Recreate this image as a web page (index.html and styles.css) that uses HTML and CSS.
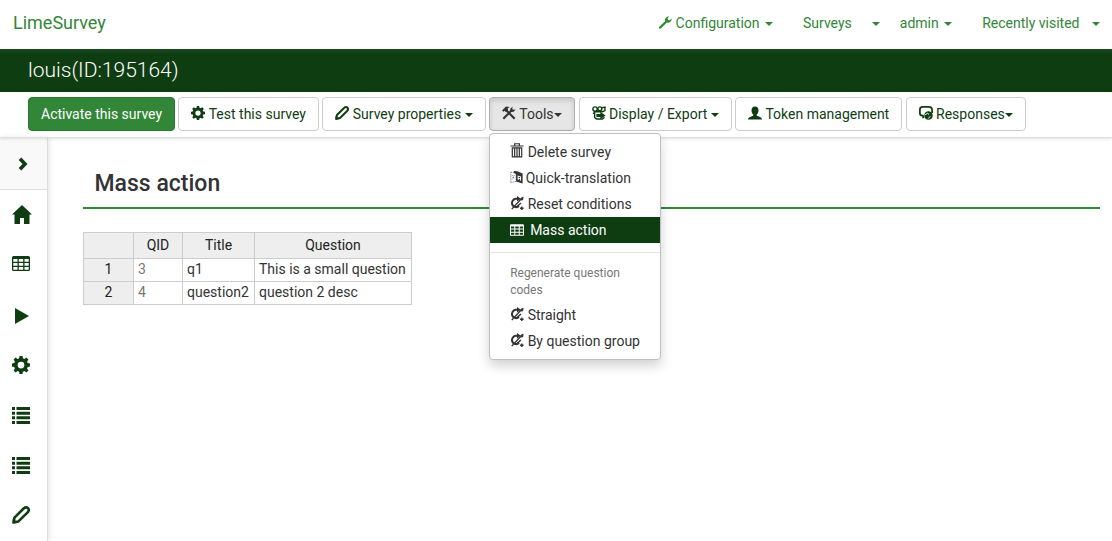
FILE: index.html
```html
<!DOCTYPE html>
<html lang="en">
<head>
    <meta charset="UTF-8">
    <meta name="viewport" content="width=device-width, initial-scale=1.0">
    <title>LimeSurvey</title>
    <link rel="stylesheet" href="styles.css">
</head>
<body>
    <!-- Icons used on the page -->
    <svg class="sprite" aria-hidden="true">
        <symbol id="cog" viewBox="0 0 16 16">
            <path fill="currentColor" fill-rule="evenodd" d="M6.700 0h2.600l.4 2 1.300.6L12.800 1.400l1.800 1.800L13.400 5l.6 1.300 2 .4v2.600l-2 .4-.6 1.300 1.200 1.800-1.800 1.800-1.800-1.200-1.300.6-.4 2H6.700l-.4-2L5 13.400l-1.800 1.200-1.800-1.800L2.600 11 2 9.700l-2-.4V6.700l2-.4L2.600 5 1.400 3.200l1.800-1.800L5 2.600 6.300 2zM8 5a3 3 0 1 0 0 6 3 3 0 0 0 0-6z"/>
        </symbol>
        <symbol id="pencil" viewBox="0 0 16 16">
            <path fill="none" stroke="currentColor" stroke-width="2.300" stroke-linejoin="round" d="M1.500 14.500l.7-4.200L10.300 2.200Q12.500.4 14.200 1.900 15.700 3.600 13.900 5.700L5.700 13.700z"/>
            <path fill="currentColor" d="M.3 15.700l.4-4.500 4 4z"/>
        </symbol>
        <symbol id="tools" viewBox="0 0 16 16">
            <path fill="none" stroke="currentColor" stroke-width="2.400" d="M1.500 14.500L11 5M4.500 4.500l10 10"/>
            <path fill="currentColor" d="M0 5l4.500-4.500L9 1 6.500 2.500l.5 2L4.500 7 3 5.500 1.500 6.500zM9.500 3L12 .5l-.2 3 .8.8 3-.3-2.300 2.700-3.300.2-1-1z"/>
        </symbol>
        <symbol id="export" viewBox="0 0 16 16">
            <g fill="none" stroke="currentColor" stroke-width="1.600">
                <circle cx="3.500" cy="3.500" r="2.500"/>
                <circle cx="9" cy="3.200" r="2.200"/>
                <path d="M11.500 2l3.300-.8v4l-3 1.300H3v6.500l2 1.800h7l2.300-2M1 8.200h2M5 5.800h5"/>
            </g>
            <path fill="currentColor" d="M5 9h4.500V6.500l6 4.300-6 4.200v-2.300H5z"/>
        </symbol>
        <symbol id="user" viewBox="0 0 16 16">
            <path fill="currentColor" d="M8 .5c2.700 0 4 1.800 4 4.500 0 2-.9 3.800-2.200 5 .2 1.200 1.200 1.500 3.200 2.200 1.800.6 2.800 1 3 3.300H0c.2-2.300 1.200-2.700 3-3.300 2-.7 3-1 3.200-2.200C4.900 8.800 4 7 4 5 4 2.300 5.300.5 8 .5z"/>
        </symbol>
        <symbol id="responses" viewBox="0 0 16 16">
            <path fill="none" stroke="currentColor" stroke-width="2" d="M5 14l-.5-3H3.500Q1 11 1 8V4q0-3 3-3h7q4 0 4 4v3"/>
            <circle cx="10.800" cy="10.800" r="4.900" fill="currentColor"/>
            <path fill="none" stroke="#fff" stroke-width="1" d="M6.500 10.500l3.500-2.500 1 2M10.500 14.500l2.500-3"/>
        </symbol>
        <symbol id="wrench" viewBox="0 0 16 16">
            <path fill="currentColor" d="M0 13.500l7.500-7C6.600 3.500 9 .2 12.500.5L10.600 2.800l.5 2 2 .3L15.600 3c.3 3.500-2.800 5.800-5.900 5L2.300 15.500H0z"/>
        </symbol>
        <symbol id="trash" viewBox="0 0 14 16">
            <path fill="none" stroke="currentColor" stroke-width="1.300" d="M0 3.200h14M4.500 3V.8h5V3M2 5.200h10v9.600H2zM4.500 5v10M7 5v10M9.500 5v10"/>
        </symbol>
        <symbol id="translate" viewBox="0 0 14 16">
            <path fill="none" stroke="currentColor" stroke-width=".8" stroke-dasharray="1.200 1" d="M.5 2.500l6 1v9.500l-6 1.500zM2 6l2.500 4M4.500 6L2 10.500"/>
            <path fill="currentColor" fill-rule="evenodd" d="M4 1l4 .5 6 2.500v11.500l-7.500-2.500V4.500L4 3.500zM8.300 6.200v5l1.200.4v-1.500l1.500.5v1.500l1.200.3V7.500zM9.500 7.700l1.500.4v1.300l-1.500-.4z"/>
        </symbol>
        <symbol id="reset" viewBox="0 0 16 16">
            <path fill="none" stroke="currentColor" stroke-width="2.300" d="M9 3.200H6.500a4.800 4.800 0 1 0 3.800 8.300"/>
            <path fill="none" stroke="currentColor" stroke-width="1.600" d="M2 15L14.500 1.500M7 13l5.500-5M11.500 14h4M13.500 12v4"/>
            <path fill="currentColor" d="M8 0l4.500 3L8 6.200zM12.500 3L15.500.5l-.5 4-2 1z"/>
        </symbol>
        <symbol id="table" viewBox="0 0 18 15">
            <path fill="currentColor" fill-rule="evenodd" d="M1.500 0h15Q18 0 18 1.500v12q0 1.500-1.500 1.500h-15Q0 15 0 13.500v-12Q0 0 1.500 0zM1.300 3v2.700h4.200V3zM6.800 3v2.700h4.400V3zM12.500 3v2.700h4.200V3zM1.300 7v2.700h4.200V7zM6.800 7v2.700h4.400V7zM12.500 7v2.700h4.200V7zM1.300 11v2.700h4.200V11zM6.800 11v2.700h4.400V11zM12.500 11v2.700h4.200V11z"/>
        </symbol>
        <symbol id="chevron" viewBox="0 0 10 14">
            <path fill="none" stroke="currentColor" stroke-width="3.600" d="M2 1.800L7 7l-5 5.200"/>
        </symbol>
        <symbol id="home" viewBox="0 0 20 19">
            <path fill="currentColor" d="M10 0l10 9.500h-2.500V19H12v-6H8v6H2.500V9.500H0z"/>
        </symbol>
        <symbol id="play" viewBox="0 0 14 16">
            <path fill="currentColor" d="M0 0l14 8-14 8z"/>
        </symbol>
        <symbol id="list" viewBox="0 0 18 17">
            <path fill="currentColor" d="M0 0h3v3H0zM4.500 0H18v3H4.500zM0 4.700h3v3H0zM4.500 4.700H18v3H4.500zM0 9.300h3v3H0zM4.500 9.300H18v3H4.500zM0 14h3v3H0zM4.500 14H18v3H4.500z"/>
        </symbol>
    </svg>

    <!-- Top navigation -->
    <nav class="navbar">
        <a class="brand">LimeSurvey</a>
        <ul class="nav">
            <li class="nav-config"><svg class="icon"><use href="#wrench"/></svg> Configuration <span class="caret"></span></li>
            <li class="nav-surveys">Surveys</li>
            <li class="nav-toggle"><span class="caret"></span></li>
            <li class="nav-admin">admin <span class="caret"></span></li>
            <li class="nav-recent">Recently visited <span class="caret"></span></li>
        </ul>
    </nav>

    <header class="title-bar">louis(ID:195164)</header>

    <!-- Survey toolbar -->
    <div class="toolbar">
        <button class="btn btn-primary">Activate this survey</button>
        <button class="btn"><svg class="icon"><use href="#cog"/></svg> Test this survey</button>
        <button class="btn"><svg class="icon"><use href="#pencil"/></svg> Survey properties <span class="caret"></span></button>
        <div class="dropdown">
            <button class="btn btn-open"><svg class="icon"><use href="#tools"/></svg> Tools<span class="caret"></span></button>
            <ul class="menu">
                <li><svg class="icon icon-trash"><use href="#trash"/></svg>Delete survey</li>
                <li><svg class="icon icon-translate"><use href="#translate"/></svg>Quick-translation</li>
                <li><svg class="icon"><use href="#reset"/></svg>Reset conditions</li>
                <li class="active"><svg class="icon"><use href="#table"/></svg>Mass action</li>
                <li class="divider"></li>
                <li class="menu-header">Regenerate question codes</li>
                <li><svg class="icon"><use href="#reset"/></svg>Straight</li>
                <li><svg class="icon"><use href="#reset"/></svg>By question group</li>
            </ul>
        </div>
        <button class="btn"><svg class="icon"><use href="#export"/></svg> Display / Export <span class="caret"></span></button>
        <button class="btn"><svg class="icon"><use href="#user"/></svg> Token management</button>
        <button class="btn"><svg class="icon"><use href="#responses"/></svg> Responses<span class="caret"></span></button>
    </div>

    <div class="wrapper">
        <aside class="sidebar">
            <div class="side-toggle"><svg class="side-chevron"><use href="#chevron"/></svg></div>
            <div class="side-item"><svg class="side-home"><use href="#home"/></svg></div>
            <div class="side-item"><svg class="side-table"><use href="#table"/></svg></div>
            <div class="side-item"><svg class="side-play"><use href="#play"/></svg></div>
            <div class="side-item"><svg><use href="#cog"/></svg></div>
            <div class="side-item"><svg class="side-list"><use href="#list"/></svg></div>
            <div class="side-item"><svg class="side-list"><use href="#list"/></svg></div>
            <div class="side-item"><svg><use href="#pencil"/></svg></div>
        </aside>

        <main>
            <h3>Mass action</h3>
            <table>
                <colgroup><col class="col-row"><col class="col-qid"><col class="col-title"><col class="col-question"></colgroup>
                <thead>
                    <tr><th></th><th>QID</th><th>Title</th><th>Question</th></tr>
                </thead>
                <tbody>
                    <tr><th>1</th><td class="dim">3</td><td>q1</td><td>This is a small question</td></tr>
                    <tr><th>2</th><td class="dim">4</td><td>question2</td><td>question 2 desc</td></tr>
                </tbody>
            </table>
        </main>
    </div>
</body>
</html>
```
FILE: styles.css
```css
* {
    box-sizing: border-box;
}

body {
    margin: 0;
    height: 541px;
    overflow: hidden;
    display: flex;
    flex-direction: column;
    font-family: Roboto, sans-serif;
    font-size: 14px;
    line-height: 20px;
    color: #333;
    background-color: #fff;
}

ul {
    list-style: none;
    margin: 0;
    padding: 0;
}

.sprite {
    display: none;
}

.icon {
    width: 14px;
    height: 14px;
    vertical-align: -1px;
}

.caret {
    display: inline-block;
    vertical-align: middle;
    border-top: 4px solid;
    border-left: 4px solid transparent;
    border-right: 4px solid transparent;
}

/* Top navigation */
.navbar {
    height: 49px;
    flex: none;
    display: flex;
    justify-content: space-between;
    padding: 13px 12px 0 13px;
    color: #328637;
}

.brand {
    font-size: 18px;
}

.nav {
    display: flex;
}

.nav .icon {
    width: 13px;
    height: 13px;
}

.nav .caret {
    margin-left: 2px;
}

.nav-surveys {
    margin-left: 30px;
}

.nav-toggle {
    margin-left: 18px;
}

.nav-admin {
    margin-left: 20px;
}

.nav-recent {
    margin-left: 30px;
}

.nav-recent .caret {
    margin-left: 9px;
}

/* Survey title */
.title-bar {
    height: 43px;
    flex: none;
    padding: 11px 28px;
    font-size: 21px;
    font-weight: 300;
    color: #fff;
    background: linear-gradient(#1b4a1e, #0f3d12 5px);
}

/* Toolbar */
.toolbar {
    height: 46px;
    flex: none;
    display: flex;
    gap: 3.4px;
    padding: 5px 28px;
    border-bottom: 1px solid #e0dede;
    box-shadow: 0 1px 3px rgba(0, 0, 0, 0.12);
    position: relative;
    z-index: 2;
}

.btn {
    height: 34px;
    padding: 0 12px;
    font: inherit;
    white-space: nowrap;
    color: #0f3d12;
    background-color: #fff;
    border: 1px solid #ccc;
    border-radius: 4px;
}

.btn-primary {
    color: #fff;
    background-color: #328637;
    border-color: #2c7731;
}

.btn-open {
    color: #333;
    background-color: #e6e6e6;
    border-color: #adadad;
    box-shadow: inset 0 3px 5px rgba(0, 0, 0, 0.125);
}

.dropdown {
    position: relative;
    margin-right: 0.5px;
}

.menu {
    position: absolute;
    top: 36px;
    left: 0;
    width: 172px;
    padding: 5px 0;
    background-color: #fff;
    border: 1px solid #bfbfbf;
    border-radius: 4px;
    box-shadow: 0 6px 12px rgba(0, 0, 0, 0.175);
}

.menu li {
    padding: 3px 20px;
    white-space: nowrap;
}

.menu .icon {
    margin-right: 3.5px;
}

.menu .icon-trash {
    height: 15px;
}

.menu .icon-translate {
    width: 13px;
    margin-right: 2.5px;
}

.menu .active {
    color: #fff;
    background-color: #0f3d12;
}

.menu .active .icon {
    margin-right: 6px;
    vertical-align: -2px;
}

.menu .divider {
    height: 1px;
    margin: 9px 0;
    padding: 0;
    background-color: #e5e5e5;
}

.menu .menu-header {
    font-size: 12px;
    line-height: 17px;
    color: #777;
    white-space: normal;
}

/* Sidebar */
.wrapper {
    flex: 1;
    display: flex;
}

.sidebar {
    width: 48px;
    flex: none;
    color: #0f3d12;
    border-right: 1px solid #ddd;
    box-shadow: 1px 0 6px rgba(0, 0, 0, 0.12);
}

.side-toggle {
    height: 52px;
    padding: 19px 18px 0;
    background-color: #f9f9f9;
    border-bottom: 1px solid #ddd;
}

.side-item {
    height: 50px;
    display: flex;
    align-items: center;
    padding-left: 12px;
}

.sidebar svg {
    display: block;
    width: 18px;
    height: 18px;
}

.sidebar .side-chevron {
    width: 10px;
    height: 14px;
}

.sidebar .side-home {
    width: 20px;
    height: 19px;
    margin-bottom: 1px;
}

.sidebar .side-table {
    height: 15px;
    margin-bottom: 3px;
}

.sidebar .side-play {
    width: 14px;
    height: 16px;
    margin-left: 3px;
    margin-top: 1px;
}

.sidebar .side-list {
    height: 17px;
    margin-top: 1px;
}

/* Content */
main {
    flex: 1;
    padding: 20px 12px 0 35px;
}

h3 {
    margin: 0 0 23px;
    padding: 13px 12px 11px 11.5px;
    font-size: 23px;
    line-height: 25px;
    font-weight: 500;
    border-bottom: 2px solid #328637;
}

table {
    width: 329px;
    table-layout: fixed;
    border-spacing: 0;
    border-top: 1px solid #ccc;
    border-left: 1px solid #ccc;
}

.col-row {
    width: 50px;
}

.col-qid {
    width: 49px;
}

.col-title {
    width: 72px;
}

th,
td {
    height: 23px;
    padding: 0 4px;
    line-height: 21px;
    white-space: nowrap;
    vertical-align: top;
    border-right: 1px solid #ccc;
    border-bottom: 1px solid #ccc;
}

th {
    font-weight: 400;
    color: #222;
    background-color: #eee;
}

thead th {
    height: 26px;
    line-height: 24px;
}

.dim {
    color: #777;
}
```
